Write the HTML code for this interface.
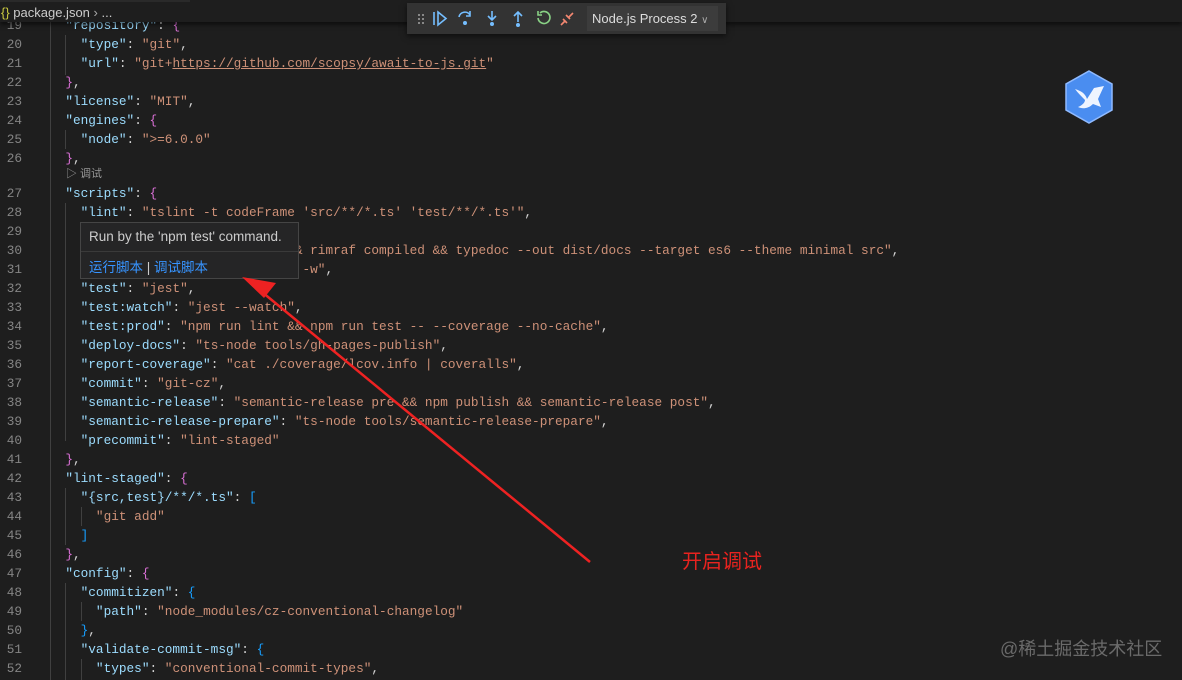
<!DOCTYPE html>
<html><head><meta charset="utf-8"><style>
*{margin:0;padding:0;box-sizing:border-box}
body{width:1182px;height:680px;background:#1e1e1e;overflow:hidden;position:relative;font-family:"Liberation Mono",monospace;font-size:12.75px;color:#d4d4d4}
.l{position:absolute;left:0;height:19px;line-height:19px;white-space:pre;width:1182px}
.n{position:absolute;left:0;width:22px;text-align:right;color:#858585}
.c{position:absolute;left:50px}
.k{color:#9cdcfe}.s{color:#ce9178}.y{color:#ffd700}.m{color:#da70d6}.b{color:#179fff}
.u{text-decoration:underline;text-decoration-color:#ce9178}
.g{position:absolute;width:1px;background:#404040}
</style></head><body>
<div class="g" style="left:50px;top:0;height:680px"></div>
<div class="g" style="left:65px;top:35px;height:40px"></div>
<div class="g" style="left:65px;top:130px;height:19px"></div>
<div class="g" style="left:65px;top:203px;height:238px"></div>
<div class="g" style="left:65px;top:488px;height:57px"></div>
<div class="g" style="left:81px;top:507px;height:19px"></div>
<div class="g" style="left:65px;top:583px;height:97px"></div>
<div class="g" style="left:81px;top:602px;height:19px"></div>
<div class="g" style="left:81px;top:659px;height:21px"></div>

<div class="l" style="top:16px"><span class="n">19</span><span class="c">  <span class="k">"repository"</span>: <span class="m">{</span></span></div>
<div class="l" style="top:35px"><span class="n">20</span><span class="c">    <span class="k">"type"</span>: <span class="s">"git"</span>,</span></div>
<div class="l" style="top:54px"><span class="n">21</span><span class="c">    <span class="k">"url"</span>: <span class="s">"git+<span class="u">https://github.com/scopsy/await-to-js.git</span>"</span></span></div>
<div class="l" style="top:73px"><span class="n">22</span><span class="c">  <span class="m">}</span>,</span></div>
<div class="l" style="top:92px"><span class="n">23</span><span class="c">  <span class="k">"license"</span>: <span class="s">"MIT"</span>,</span></div>
<div class="l" style="top:111px"><span class="n">24</span><span class="c">  <span class="k">"engines"</span>: <span class="m">{</span></span></div>
<div class="l" style="top:130px"><span class="n">25</span><span class="c">    <span class="k">"node"</span>: <span class="s">"&gt;=6.0.0"</span></span></div>
<div class="l" style="top:149px"><span class="n">26</span><span class="c">  <span class="m">}</span>,</span></div>
<div class="l" style="top:165px;font-family:'Liberation Sans','Noto Sans CJK SC',sans-serif;font-size:11px;color:#999"><span style="position:absolute;left:66px">▷ 调试</span></div>
<div class="l" style="top:184px"><span class="n">27</span><span class="c">  <span class="k">"scripts"</span>: <span class="m">{</span></span></div>
<div class="l" style="top:203px"><span class="n">28</span><span class="c">    <span class="k">"lint"</span>: <span class="s">"tslint -t codeFrame 'src/**/*.ts' 'test/**/*.ts'"</span>,</span></div>
<div class="l" style="top:222px"><span class="n">29</span><span class="c">    <span class="k">"prebuild"</span>: <span class="s">"rimraf dist"</span>,</span></div>
<div class="l" style="top:241px"><span class="n">30</span><span class="c">    <span class="k">"build"</span>: <span class="s">"tsc --module cjs &amp;&amp; rimraf compiled &amp;&amp; typedoc --out dist/docs --target es6 --theme minimal src"</span>,</span></div>
<div class="l" style="top:260px"><span class="n">31</span><span class="c">    <span class="k">"start"</span>: <span class="s">"tsc -module common -w"</span>,</span></div>
<div class="l" style="top:279px"><span class="n">32</span><span class="c">    <span class="k">"test"</span>: <span class="s">"jest"</span>,</span></div>
<div class="l" style="top:298px"><span class="n">33</span><span class="c">    <span class="k">"test:watch"</span>: <span class="s">"jest --watch"</span>,</span></div>
<div class="l" style="top:317px"><span class="n">34</span><span class="c">    <span class="k">"test:prod"</span>: <span class="s">"npm run lint &amp;&amp; npm run test -- --coverage --no-cache"</span>,</span></div>
<div class="l" style="top:336px"><span class="n">35</span><span class="c">    <span class="k">"deploy-docs"</span>: <span class="s">"ts-node tools/gh-pages-publish"</span>,</span></div>
<div class="l" style="top:355px"><span class="n">36</span><span class="c">    <span class="k">"report-coverage"</span>: <span class="s">"cat ./coverage/lcov.info | coveralls"</span>,</span></div>
<div class="l" style="top:374px"><span class="n">37</span><span class="c">    <span class="k">"commit"</span>: <span class="s">"git-cz"</span>,</span></div>
<div class="l" style="top:393px"><span class="n">38</span><span class="c">    <span class="k">"semantic-release"</span>: <span class="s">"semantic-release pre &amp;&amp; npm publish &amp;&amp; semantic-release post"</span>,</span></div>
<div class="l" style="top:412px"><span class="n">39</span><span class="c">    <span class="k">"semantic-release-prepare"</span>: <span class="s">"ts-node tools/semantic-release-prepare"</span>,</span></div>
<div class="l" style="top:431px"><span class="n">40</span><span class="c">    <span class="k">"precommit"</span>: <span class="s">"lint-staged"</span></span></div>
<div class="l" style="top:450px"><span class="n">41</span><span class="c">  <span class="m">}</span>,</span></div>
<div class="l" style="top:469px"><span class="n">42</span><span class="c">  <span class="k">"lint-staged"</span>: <span class="m">{</span></span></div>
<div class="l" style="top:488px"><span class="n">43</span><span class="c">    <span class="k">"{src,test}/**/*.ts"</span>: <span class="b">[</span></span></div>
<div class="l" style="top:507px"><span class="n">44</span><span class="c">      <span class="s">"git add"</span></span></div>
<div class="l" style="top:526px"><span class="n">45</span><span class="c">    <span class="b">]</span></span></div>
<div class="l" style="top:545px"><span class="n">46</span><span class="c">  <span class="m">}</span>,</span></div>
<div class="l" style="top:564px"><span class="n">47</span><span class="c">  <span class="k">"config"</span>: <span class="m">{</span></span></div>
<div class="l" style="top:583px"><span class="n">48</span><span class="c">    <span class="k">"commitizen"</span>: <span class="b">{</span></span></div>
<div class="l" style="top:602px"><span class="n">49</span><span class="c">      <span class="k">"path"</span>: <span class="s">"node_modules/cz-conventional-changelog"</span></span></div>
<div class="l" style="top:621px"><span class="n">50</span><span class="c">    <span class="b">}</span>,</span></div>
<div class="l" style="top:640px"><span class="n">51</span><span class="c">    <span class="k">"validate-commit-msg"</span>: <span class="b">{</span></span></div>
<div class="l" style="top:659px"><span class="n">52</span><span class="c">      <span class="k">"types"</span>: <span class="s">"conventional-commit-types"</span>,</span></div>

<!-- breadcrumb -->
<div style="position:absolute;left:0;top:0;width:1182px;height:22px;background:#1e1e1e;box-shadow:0 3px 4px rgba(0,0,0,.5)"></div>
<div style="position:absolute;left:0;top:0;width:190px;height:2px;background:#2a2a2a"></div>
<div style="position:absolute;left:1px;top:5px;font-family:'Liberation Sans',sans-serif;font-size:13px;color:#ccc;white-space:pre"><span style="color:#cbcb41">{}</span> package.json <span style="color:#aaa">›</span> ...</div>

<!-- debug toolbar -->
<div style="position:absolute;left:407px;top:3px;width:319px;height:31px;background:#333333;box-shadow:0 2px 6px rgba(0,0,0,.6)">
<svg width="180" height="31" style="position:absolute;left:0;top:0" fill="none" stroke-width="1.6">
<g fill="#888"><rect x="11" y="11" width="2" height="2"/><rect x="15" y="11" width="2" height="2"/><rect x="11" y="15" width="2" height="2"/><rect x="15" y="15" width="2" height="2"/><rect x="11" y="19" width="2" height="2"/><rect x="15" y="19" width="2" height="2"/></g>
<g stroke="#75beff"><path d="M27 9v13"/><path d="M31 9l8 6.5-8 6.5z"/>
<path d="M52 14a6 6 0 0 1 11-2"/><path d="M63 8v5h-4"/>
<path d="M85 8v8M81 13l4 4 4-4"/>
<path d="M111 19V10M107 13l4-4 4 4"/></g>
<g fill="#75beff"><circle cx="58" cy="20" r="2"/><circle cx="85" cy="21" r="2"/><circle cx="111" cy="22" r="2"/></g>
<path d="M131 15a6 6 0 1 0 2-5M131 8v4h4" stroke="#89d185"/>
<path d="M154 22l4-4M162 14l4-4M156 16l4 4M159 12l4 4" stroke="#f48771"/>
</svg>
<div style="position:absolute;left:180px;top:3px;width:131px;height:25px;background:#3c3c3c;font-family:'Liberation Sans',sans-serif;font-size:13px;color:#ddd;line-height:25px;padding-left:5px">Node.js Process 2 <span style="font-size:10px;color:#aaa">∨</span></div>
</div>

<!-- logo -->
<svg style="position:absolute;left:1063px;top:69px" width="52" height="56" viewBox="0 0 52 56">
<path d="M26 2L49 15V41L26 54L3 41V15Z" fill="#4a8df0" stroke="#8fbaff" stroke-width="1.5"/>
<path d="M12 20C18 22 22 24 24 30L31 19L41 17L35 30L38 38L30 35C25 40 19 40 15 38C20 36 22 33 22 31C18 27 15 24 12 20Z" fill="#eef4ff"/>
</svg>

<!-- tooltip -->
<div style="position:absolute;left:80px;top:222px;width:219px;height:57px;background:#252526;border:1px solid #454545;font-family:'Liberation Sans','Noto Sans CJK SC',sans-serif;font-size:13.5px">
<div style="position:absolute;left:8px;top:6px;color:#ccc">Run by the 'npm test' command.</div>
<div style="position:absolute;left:0;top:28px;width:217px;height:1px;background:#3a3a3a"></div>
<div style="position:absolute;left:8px;top:33px;color:#3794ff">运行脚本 <span style="color:#ccc">|</span> 调试脚本</div>
</div>

<!-- arrow -->
<svg style="position:absolute;left:0;top:0" width="1182" height="680">
<line x1="590" y1="562" x2="262" y2="292" stroke="#ee2222" stroke-width="2.5"/>
<path d="M242 277L276 283L264 298Z" fill="#ee2222"/>
</svg>
<div style="position:absolute;left:682px;top:545px;font-family:'Noto Sans CJK SC',sans-serif;font-size:20px;color:#e8231f">开启调试</div>
<div style="position:absolute;left:1000px;top:635px;font-family:'Liberation Sans','Noto Sans CJK SC',sans-serif;font-size:18px;color:#6a6a6a">@稀土掘金技术社区</div>
</body></html>
